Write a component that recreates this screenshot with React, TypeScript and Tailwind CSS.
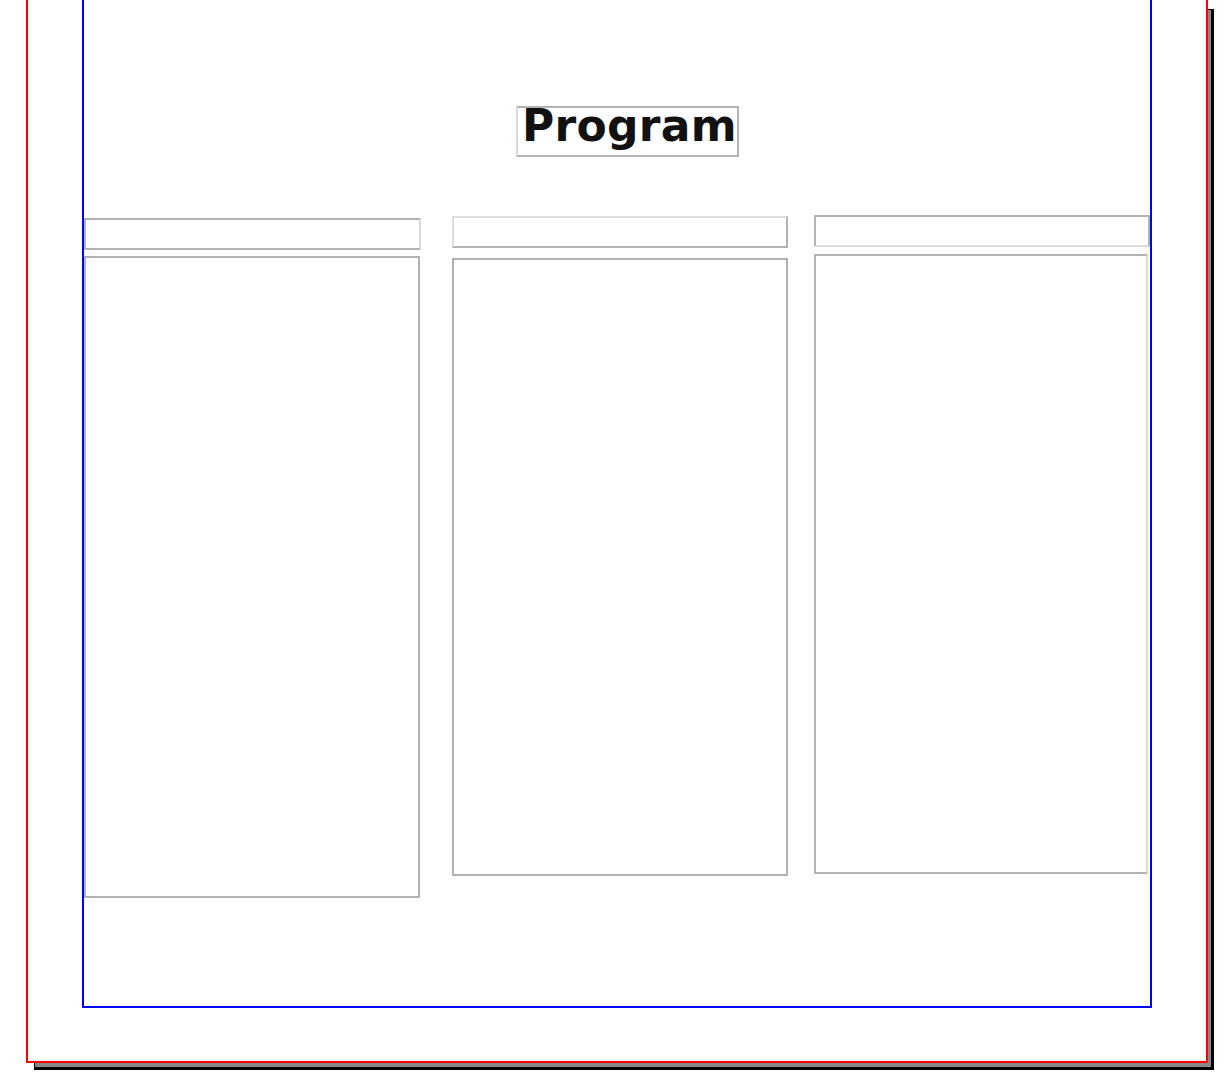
export default function App() {
  return (
    <div className="min-h-screen bg-white pl-[26px]">
      {/* Page sheet with drop shadow */}
      <div className="w-[1182px] h-[1063px] border-x-2 border-b-2 border-t-0 border-[#ff0000] bg-white px-[54px] shadow-[6px_7px_0_-3px_#888888,7px_8px_0_-1px_#000000]">
        {/* Content frame */}
        <div className="flex h-[1008px] w-[1070px] flex-col border-x-2 border-b-2 border-t-0 border-[#0000ff]">
          <div className="flex pt-[106px] pl-[432px]">
            <div className="flex h-[51px] w-[223px] items-center justify-center border-2 border-[#b3b3b3] border-l-[#d9d9d9]">
              <h1 className="mb-[11px] pl-[4px] text-[44px] font-bold leading-none tracking-[0.3px] text-[#111111] font-['DejaVu_Sans',sans-serif]">
                Program
              </h1>
            </div>
          </div>

          <div className="flex items-start">
            {/* Column 1 */}
            <div className="mt-[61px] flex flex-col">
              <div className="h-[32px] w-[337px] border-2 border-[#b3b3b3] border-r-[#dcdcdc]" />
              <div className="mt-[6px] h-[642px] w-[336px] border-2 border-[#b3b3b3]" />
            </div>

            {/* Column 2 */}
            <div className="ml-[31px] mt-[59px] flex flex-col">
              <div className="h-[32px] w-[336px] border-2 border-[#b3b3b3] border-l-[#dcdcdc] border-t-[#dcdcdc]" />
              <div className="mt-[10px] h-[618px] w-[336px] border-2 border-[#b3b3b3]" />
            </div>

            {/* Column 3 */}
            <div className="ml-[26px] mt-[58px] flex flex-col">
              <div className="h-[32px] w-[336px] border-2 border-[#b3b3b3] border-b-[#dcdcdc]" />
              <div className="mt-[7px] h-[620px] w-[334px] border-2 border-[#b3b3b3] border-r-[#dcdcdc]" />
            </div>
          </div>
        </div>
      </div>
    </div>
  );
}
